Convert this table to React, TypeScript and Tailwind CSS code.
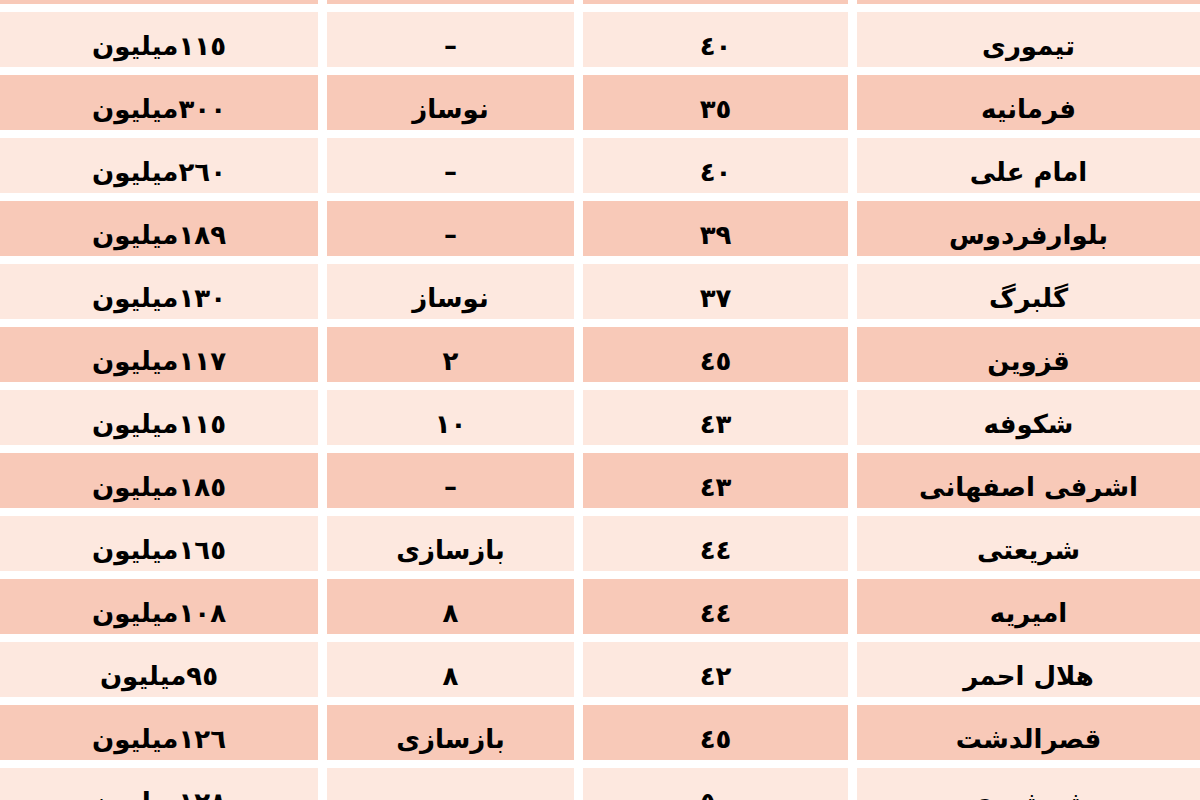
import React from "react";

type Row = { name: string; area: string; age: string; price: string };

const rows: Row[] = [
  { name: "ستارخان", area: "٤٨", age: "–", price: "١٥٠میلیون" },
  { name: "تیموری", area: "٤٠", age: "–", price: "١١٥میلیون" },
  { name: "فرمانیه", area: "٣٥", age: "نوساز", price: "٣٠٠میلیون" },
  { name: "امام علی", area: "٤٠", age: "–", price: "٢٦٠میلیون" },
  { name: "بلوارفردوس", area: "٣٩", age: "–", price: "١٨٩میلیون" },
  { name: "گلبرگ", area: "٣٧", age: "نوساز", price: "١٣٠میلیون" },
  { name: "قزوین", area: "٤٥", age: "٢", price: "١١٧میلیون" },
  { name: "شکوفه", area: "٤٣", age: "١٠", price: "١١٥میلیون" },
  { name: "اشرفی اصفهانی", area: "٤٣", age: "–", price: "١٨٥میلیون" },
  { name: "شریعتی", area: "٤٤", age: "بازسازی", price: "١٦٥میلیون" },
  { name: "امیریه", area: "٤٤", age: "٨", price: "١٠٨میلیون" },
  { name: "هلال احمر", area: "٤٢", age: "٨", price: "٩٥میلیون" },
  { name: "قصرالدشت", area: "٤٥", age: "بازسازی", price: "١٢٦میلیون" },
  { name: "شمشیری", area: "٥٠", age: "–", price: "١٢٨میلیون" },
];

export default function App() {
  return (
    <div className="w-[1200px] h-[800px] overflow-hidden bg-white">
      <div
        dir="rtl"
        className="-mt-[51px] grid grid-cols-[343px_265px_247px_318px] auto-rows-[55px] gap-x-[9px] gap-y-[8px] text-black font-bold text-[26px]"
        style={{ fontFamily: '"DejaVu Sans", sans-serif' }}
      >
        {rows.map((r, i) => {
          const bg = i % 2 === 0 ? "bg-[#f8c9b8]" : "bg-[#fde8df]";
          return (
            <React.Fragment key={i}>
              <div className={`${bg} flex items-center justify-center pt-[14px]`}>{r.name}</div>
              <div className={`${bg} flex items-center justify-center pt-[14px]`}>{r.area}</div>
              <div className={`${bg} flex items-center justify-center pt-[14px]`}>{r.age}</div>
              <div className={`${bg} flex items-center justify-center pt-[14px]`}>{r.price}</div>
            </React.Fragment>
          );
        })}
      </div>
    </div>
  );
}
